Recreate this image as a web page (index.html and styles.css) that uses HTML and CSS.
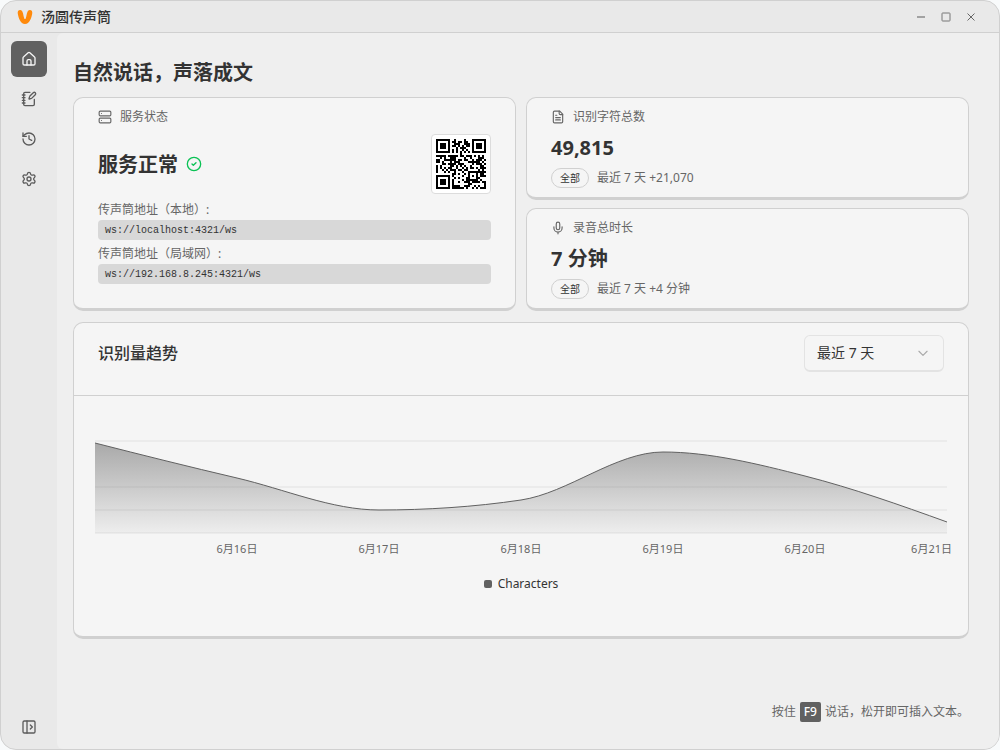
FILE: index.html
```html
<!DOCTYPE html>
<html lang="zh-CN">
<head>
<meta charset="utf-8">
<title>汤圆传声筒</title>
<link rel="stylesheet" href="styles.css">
</head>
<body>
<div class="window">
  <header class="titlebar">
    <svg class="logo" viewBox="0 0 16 16" aria-hidden="true"><path d="M3.200 1C1.200 1 .4 2.700.8 4.800 1.500 8.800 3.300 15 8 15S14.500 8.800 15.200 4.800C15.600 2.700 14.800 1 12.800 1 10 1 10.100 5 9 8.500 8.700 9.500 8.500 10 8 10S7.300 9.500 7 8.500C5.900 5 6 1 3.200 1Z" fill="#ff8a0c"/></svg>
    <span class="app-name">汤圆传声筒</span>
    <div class="controls">
      <button type="button" aria-label="最小化"><svg viewBox="0 0 10 10"><path d="M1 5h8" stroke="#8a8a8a" stroke-width="1.600"/></svg></button>
      <button type="button" aria-label="最大化"><svg viewBox="0 0 10 10"><rect x="1" y="1" width="8" height="8" rx=".6" stroke="#777"/></svg></button>
      <button type="button" aria-label="关闭"><svg viewBox="0 0 10 10"><path d="M1.500 1.500l7 7M8.500 1.500l-7 7" stroke="#666"/></svg></button>
    </div>
  </header>
  <div class="body">
    <nav class="sidebar">
      <a class="nav-item active" href="#home" aria-label="首页"><svg class="icon" viewBox="0 0 24 24"><path d="M3 10.500a2 2 0 0 1 .7-1.500l7-6.300a2 2 0 0 1 2.600 0l7 6.300a2 2 0 0 1 .7 1.500V19a2 2 0 0 1-2 2H5a2 2 0 0 1-2-2Z"/><path d="M9 21v-6a2 2 0 0 1 2-2h2a2 2 0 0 1 2 2v6"/></svg></a>
      <a class="nav-item" href="#notes" aria-label="笔记"><svg class="icon" viewBox="0 0 24 24"><path d="M13.400 2H6a2 2 0 0 0-2 2v16a2 2 0 0 0 2 2h12a2 2 0 0 0 2-2v-7.400"/><path d="M2 6h4M2 10h4M2 14h4M2 18h4"/><path d="M21.400 5.600a1 1 0 1 0-3-3l-5 5a2 2 0 0 0-.5.9l-.9 2.900a.5.5 0 0 0 .6.600l2.900-.8a2 2 0 0 0 .8-.5Z"/></svg></a>
      <a class="nav-item" href="#history" aria-label="历史"><svg class="icon" viewBox="0 0 24 24"><path d="M3 12a9 9 0 1 0 9-9 9.750 9.750 0 0 0-6.740 2.740L3 8"/><path d="M3 3v5h5M12 7v5l4 2"/></svg></a>
      <a class="nav-item" href="#settings" aria-label="设置"><svg class="icon" viewBox="0 0 24 24"><path d="M9.670 4.140a2.340 2.340 0 0 1 4.660 0 2.340 2.340 0 0 0 3.320 1.910 2.340 2.340 0 0 1 2.330 4.040 2.340 2.340 0 0 0 0 3.830 2.340 2.340 0 0 1-2.330 4.040 2.340 2.340 0 0 0-3.320 1.910 2.340 2.340 0 0 1-4.660 0 2.340 2.340 0 0 0-3.320-1.910 2.340 2.340 0 0 1-2.330-4.040 2.340 2.340 0 0 0 0-3.830 2.340 2.340 0 0 1 2.330-4.040 2.340 2.340 0 0 0 3.320-1.910"/><circle cx="12" cy="12" r="3"/></svg></a>
      <button class="nav-item toggle" type="button" aria-label="展开侧栏"><svg class="icon" viewBox="0 0 24 24"><rect x="3" y="3" width="18" height="18" rx="2"/><path d="M9 3v18M14 9l3 3-3 3"/></svg></button>
    </nav>
    <main class="main">
      <h1 class="heading">自然说话，声落成文</h1>
      <div class="cards">
        <section class="card status">
          <h2 class="label"><svg class="icon" viewBox="0 0 24 24"><rect x="2" y="2" width="20" height="8" rx="2"/><rect x="2" y="14" width="20" height="8" rx="2"/><path d="M6 6h.01M6 18h.01"/></svg>服务状态</h2>
          <div class="state">
            <strong class="value">服务正常</strong>
            <svg class="icon ok" viewBox="0 0 24 24"><circle cx="12" cy="12" r="10"/><path d="M9 12l2 2 4-4"/></svg>
            <div class="qr"><svg id="qr" viewBox="0 0 25 25" shape-rendering="crispEdges" role="img" aria-label="二维码"></svg></div>
          </div>
          <p class="address-label">传声筒地址（本地）:</p>
          <code class="address">ws://localhost:4321/ws</code>
          <p class="address-label">传声筒地址（局域网）:</p>
          <code class="address">ws://192.168.8.245:4321/ws</code>
        </section>
        <div class="stack">
          <section class="card stat">
            <h2 class="label"><svg class="icon" viewBox="0 0 24 24"><path d="M15 2H6a2 2 0 0 0-2 2v16a2 2 0 0 0 2 2h12a2 2 0 0 0 2-2V7Z"/><path d="M14 2v4a2 2 0 0 0 2 2h4M10 9H8M16 13H8M16 17H8"/></svg>识别字符总数</h2>
            <strong class="value">49,815</strong>
            <p class="note"><span class="badge">全部</span>最近 7 天 +21,070</p>
          </section>
          <section class="card stat">
            <h2 class="label"><svg class="icon" viewBox="0 0 24 24"><path d="M12 19v3M19 10v2a7 7 0 0 1-14 0v-2"/><rect x="9" y="2" width="6" height="13" rx="3"/></svg>录音总时长</h2>
            <strong class="value">7 分钟</strong>
            <p class="note"><span class="badge">全部</span>最近 7 天 +4 分钟</p>
          </section>
        </div>
      </div>
      <section class="card trend">
        <div class="trend-head">
          <h2 class="trend-title">识别量趋势</h2>
          <div class="picker">
            <select aria-label="时间范围"><option>最近 7 天</option></select>
            <svg class="icon chevron" viewBox="0 0 24 24"><path d="M5 9l7 7 7-7"/></svg>
          </div>
        </div>
        <div class="chart">
          <svg class="plot" viewBox="0 0 852 94" preserveAspectRatio="none" role="img" aria-label="识别量趋势图">
            <defs><linearGradient id="fill" gradientUnits="userSpaceOnUse" x1="0" y1="2" x2="0" y2="93"><stop offset="0" stop-color="#616161" stop-opacity=".52"/><stop offset="1" stop-color="#616161" stop-opacity=".05"/></linearGradient></defs>
            <path d="M0 1H852M0 47H852M0 70H852M0 93H852" stroke="#ebebeb" stroke-width="2"/>
            <path d="M0 3C47 15 95 27 142 38S237 70 284 70C331 70 379 67 426 60S521 12 568 12C615 12 663 24 710 36S805 65 852 82V93H0Z" fill="url(#fill)"/>
            <path d="M0 3C47 15 95 27 142 38S237 70 284 70C331 70 379 67 426 60S521 12 568 12C615 12 663 24 710 36S805 65 852 82" fill="none" stroke="#616161"/>
          </svg>
          <div class="axis"><span>6月16日</span><span>6月17日</span><span>6月18日</span><span>6月19日</span><span>6月20日</span><span>6月21日</span></div>
          <div class="legend"><i class="swatch"></i>Characters</div>
        </div>
      </section>
      <p class="hint">按住<kbd>F9</kbd>说话，松开即可插入文本。</p>
    </main>
  </div>
</div>
<script src="qr.js"></script>
</body>
</html>
```

FILE: styles.css
```css
* { box-sizing: border-box; }
body {
  margin: 0;
  background: #f8fafb;
  color: #333;
  font: 12px/16px "Noto Sans", "Noto Sans CJK SC", sans-serif;
}
h1, h2, p { margin: 0; }
button { padding: 0; border: 0; background: none; color: inherit; font: inherit; }
.window {
  display: flex;
  flex-direction: column;
  min-height: 100vh;
  border: 1px solid #d0d0d0;
  border-radius: 16px;
  background: #e9e9e9;
  overflow: hidden;
}
.titlebar {
  display: flex;
  align-items: center;
  gap: 8px;
  height: 32px;
  padding: 0 20px 0 16px;
  border-bottom: 1px solid #d0d0d0;
}
.logo { width: 16px; height: 16px; }
.app-name { font-size: 14px; font-weight: 500; }
.controls { display: flex; gap: 8px; margin-left: auto; }
.controls button { display: grid; place-items: center; width: 17px; height: 16px; }
.controls svg { width: 10px; height: 10px; fill: none; }
.body { display: flex; flex: 1; }
.sidebar {
  display: flex;
  flex-direction: column;
  gap: 4px;
  width: 56px;
  padding: 8px 10px 4px;
}
.nav-item {
  display: grid;
  place-items: center;
  width: 36px;
  height: 36px;
  border-radius: 6px;
  color: #5c5c5c;
}
.nav-item.active { background: #616161; color: #f5f5f5; }
.nav-item.toggle { margin-top: auto; }
.icon {
  flex: none;
  width: 14px;
  height: 14px;
  fill: none;
  stroke: currentColor;
  stroke-width: 2;
  stroke-linecap: round;
  stroke-linejoin: round;
}
.nav-item .icon { width: 16px; height: 16px; }
.main {
  display: flex;
  flex: 1;
  flex-direction: column;
  min-width: 0;
  padding: 24px 30px 27px 16px;
  border-radius: 6px 0 0 6px;
  background: #efefef;
}
.heading { margin-bottom: 8px; font-size: 20px; line-height: 32px; }
.cards { display: grid; grid-template-columns: 1fr 1fr; gap: 10px; }
.stack { display: grid; gap: 8px; }
.card {
  border: 1px solid #d0d0d0;
  border-bottom-width: 3px;
  border-radius: 10px;
  background: #f5f5f5;
}
.status, .stat { padding: 11px 24px 9px; }
.label {
  display: flex;
  align-items: center;
  gap: 8px;
  color: #666;
  font-size: 12px;
  font-weight: 400;
  line-height: 16px;
}
.state { display: flex; align-items: center; gap: 8px; margin: 9px 0 8px; }
.value { font-size: 20px; line-height: 32px; }
.state .value { padding-top: 2px; }
.ok { width: 16px; height: 16px; color: #0bc255; }
.qr {
  width: 60px;
  height: 60px;
  margin-left: auto;
  padding: 4px;
  border: 1px solid #dcdcdc;
  border-radius: 4px;
  background: #fff;
}
.qr svg { display: block; width: 50px; height: 50px; }
.address-label { color: #666; line-height: 16px; }
.address {
  display: block;
  margin: 2px 0 6px;
  padding: 1px 7px 0;
  border-radius: 4px;
  background: #d8d8d8;
  font: 10px/19px "Liberation Mono", monospace;
}
.stat .value { display: block; }
.stat .label { margin-bottom: 7px; }
.note { display: flex; align-items: center; gap: 8px; margin-top: 4px; color: #666; }
.badge {
  padding: 0 8px;
  border: 1px solid #d0d0d0;
  border-radius: 10px;
  color: #333;
  font-size: 10px;
  line-height: 18px;
}
.trend { margin-top: 11px; }
.trend-head {
  display: flex;
  align-items: flex-start;
  justify-content: space-between;
  min-height: 73px;
  padding: 12px 24px;
  border-bottom: 1px solid #d0d0d0;
}
.trend-title { font-size: 16px; font-weight: 500; line-height: 36px; }
.picker { position: relative; }
.picker select {
  width: 140px;
  height: 37px;
  padding: 0 12px;
  border: 1px solid #e3e3e3;
  border-bottom-width: 2px;
  border-radius: 6px;
  background: #f5f5f5;
  color: #333;
  font: inherit;
  font-size: 14px;
  appearance: none;
}
.chevron { position: absolute; top: 11px; right: 14px; color: #aaa; pointer-events: none; }
.chart { padding: 44px 21px; }
.plot { display: block; width: 100%; height: 94px; }
.axis {
  display: grid;
  grid-template-columns: repeat(5, 2fr) 1fr;
  margin-top: 7px;
  padding-left: calc(100% / 12);
  color: #666;
  font-size: 11px;
  text-align: center;
}
.axis span:last-child { margin-right: -5px; text-align: right; }
.legend { display: flex; align-items: center; justify-content: center; gap: 6px; margin-top: 19px; }
.swatch { width: 8px; height: 8px; border-radius: 2px; background: #616161; }
.hint {
  display: flex;
  align-items: center;
  justify-content: flex-end;
  gap: 4px;
  margin-top: auto;
  color: #666;
}
.hint kbd {
  padding: 0 4px;
  border-radius: 2px;
  background: #616161;
  color: #fff;
  font: 500 12px/20px "Noto Sans", sans-serif;
}
```

FILE: qr.js
```js
// Version 2 QR encoder (25x25, byte mode, error correction level L).
function encodeQr(text) {
  const size = 25;
  const ecCount = 10;
  const dataCount = 44 - ecCount;
  const bytes = [...new TextEncoder().encode(text)];
  const bits = '0100' + bytes.length.toString(2).padStart(8, '0') +
    bytes.map(b => b.toString(2).padStart(8, '0')).join('') + '0000';
  const data = bits.match(/.{8}/g).map(b => parseInt(b, 2));
  for (let pad = 0xec; data.length < dataCount; pad ^= 0xec ^ 0x11) data.push(pad);

  const mul = (a, b) => {
    let z = 0;
    for (let i = 7; i >= 0; i--) { z = (z << 1) ^ ((z >>> 7) * 0x11d); z ^= ((b >>> i) & 1) * a; }
    return z;
  };
  const divisor = Array(ecCount).fill(0);
  divisor[ecCount - 1] = 1;
  for (let i = 0, root = 1; i < ecCount; i++, root = mul(root, 2)) {
    for (let j = 0; j < ecCount; j++) {
      divisor[j] = mul(divisor[j], root);
      if (j + 1 < ecCount) divisor[j] ^= divisor[j + 1];
    }
  }
  const ec = Array(ecCount).fill(0);
  data.forEach(b => {
    const f = b ^ ec.shift();
    ec.push(0);
    divisor.forEach((c, i) => { ec[i] ^= mul(c, f); });
  });
  const words = data.concat(ec);

  const build = mask => {
    const grid = Array.from({ length: size }, () => Array(size).fill(0));
    const fixed = Array.from({ length: size }, () => Array(size).fill(false));
    const set = (x, y, v) => {
      if (x < 0 || y < 0 || x >= size || y >= size) return;
      grid[y][x] = v ? 1 : 0;
      fixed[y][x] = true;
    };
    for (let i = 0; i < size; i++) { set(6, i, i % 2 === 0); set(i, 6, i % 2 === 0); }
    [[3, 3], [size - 4, 3], [3, size - 4]].forEach(([cx, cy]) => {
      for (let dy = -4; dy <= 4; dy++) for (let dx = -4; dx <= 4; dx++) {
        const d = Math.max(Math.abs(dx), Math.abs(dy));
        set(cx + dx, cy + dy, d !== 2 && d !== 4);
      }
    });
    for (let dy = -2; dy <= 2; dy++) for (let dx = -2; dx <= 2; dx++)
      set(18 + dx, 18 + dy, Math.max(Math.abs(dx), Math.abs(dy)) !== 1);
    const info = 1 << 3 | mask;
    let rem = info;
    for (let i = 0; i < 10; i++) rem = (rem << 1) ^ ((rem >>> 9) * 0x537);
    const f = (info << 10 | rem) ^ 0x5412;
    const bit = i => (f >>> i) & 1;
    for (let i = 0; i <= 5; i++) set(8, i, bit(i));
    set(8, 7, bit(6)); set(8, 8, bit(7)); set(7, 8, bit(8));
    for (let i = 9; i < 15; i++) set(14 - i, 8, bit(i));
    for (let i = 0; i < 8; i++) set(size - 1 - i, 8, bit(i));
    for (let i = 8; i < 15; i++) set(8, size - 15 + i, bit(i));
    set(8, size - 8, 1);
    const flip = [
      (x, y) => (x + y) % 2, (x, y) => y % 2, (x, y) => x % 3, (x, y) => (x + y) % 3,
      (x, y) => ((x / 3 | 0) + (y / 2 | 0)) % 2, (x, y) => x * y % 2 + x * y % 3,
      (x, y) => (x * y % 2 + x * y % 3) % 2, (x, y) => ((x + y) % 2 + x * y % 3) % 2
    ][mask];
    let n = 0;
    for (let right = size - 1; right >= 1; right -= 2) {
      if (right === 6) right = 5;
      for (let v = 0; v < size; v++) for (let j = 0; j < 2; j++) {
        const x = right - j;
        const y = ((right + 1) & 2) === 0 ? size - 1 - v : v;
        if (fixed[y][x]) continue;
        const b = n < words.length * 8 ? (words[n >> 3] >>> (7 - (n & 7))) & 1 : 0;
        grid[y][x] = b ^ (flip(x, y) === 0 ? 1 : 0);
        n++;
      }
    }
    return grid;
  };

  const penalty = grid => {
    let score = 0;
    const lines = grid.map(r => r.join('')).concat(grid.map((_, i) => grid.map(r => r[i]).join('')));
    lines.forEach(line => {
      (line.match(/0{5,}|1{5,}/g) || []).forEach(run => { score += run.length - 2; });
      for (let i = 0; i + 11 <= size; i++) {
        const part = line.substr(i, 11);
        if (part === '10111010000' || part === '00001011101') score += 40;
      }
    });
    for (let y = 0; y < size - 1; y++) for (let x = 0; x < size - 1; x++) {
      const s = grid[y][x] + grid[y][x + 1] + grid[y + 1][x] + grid[y + 1][x + 1];
      if (s === 0 || s === 4) score += 3;
    }
    const dark = grid.flat().reduce((a, b) => a + b, 0);
    return score + Math.floor(Math.abs(dark * 20 - size * size * 10) / (size * size)) * 10;
  };
  return [0, 1, 2, 3, 4, 5, 6, 7].map(build).reduce((a, b) => penalty(b) < penalty(a) ? b : a);
}

const modules = encodeQr('ws://192.168.8.245:4321/ws');
const d = modules.map((row, y) => row.map((on, x) => on ? `M${x} ${y}h1v1h-1z` : '').join('')).join('');
document.getElementById('qr').innerHTML = `<path d="${d}" fill="#000"/>`;
```
